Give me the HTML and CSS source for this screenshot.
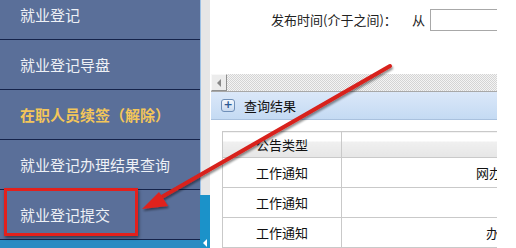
FILE: index.html
```html
<!DOCTYPE html>
<html lang="zh">
<head>
<meta charset="utf-8">
<link rel="stylesheet" href="styles.css">
</head>
<body>
<div class="page">
  <nav class="sidebar">
    <div class="item">就业登记</div>
    <div class="item">就业登记导盘</div>
    <div class="item active">在职人员续签（解除）</div>
    <div class="item">就业登记办理结果查询</div>
    <div class="item">就业登记提交</div>
    <div class="band"></div>
  </nav>
  <div class="splitter"><div class="split-top"></div><div class="split-bottom"><span class="tri"></span></div></div>
  <main class="main">
    <div class="form-row">
      <span class="label">发布时间(介于之间)：</span>
      <span class="from">从</span>
      <span class="input"></span>
    </div>
    <div class="scroll-row"><span class="scroll-btn"><span class="larr"></span></span></div>
    <div class="panel-head"><span class="plus">+</span><span class="title">查询结果</span></div>
    <table class="grid">
      <tr class="head"><td class="col1">公告类型</td><td></td></tr>
      <tr><td class="col1">工作通知</td><td class="c2"><span class="t1">网办</span></td></tr>
      <tr><td class="col1">工作通知</td><td class="c2"></td></tr>
      <tr><td class="col1">工作通知</td><td class="c2"><span class="t3">办</span></td></tr>
    </table>
  </main>
</div>
<div class="redbox"></div>
<svg class="arrow" width="516" height="248" viewBox="0 0 516 248">
  <defs>
    <filter id="sh" x="-10%" y="-10%" width="120%" height="130%">
      <feGaussianBlur in="SourceAlpha" stdDeviation="1.2"/>
      <feOffset dx="1" dy="2" result="b"/>
      <feComponentTransfer><feFuncA type="linear" slope="0.45"/></feComponentTransfer>
      <feMerge><feMergeNode/><feMergeNode in="SourceGraphic"/></feMerge>
    </filter>
  </defs>
  <g filter="url(#sh)">
    <line x1="390" y1="66" x2="160" y2="198" stroke="#d8201c" stroke-width="4" stroke-linecap="round"/>
    <polygon points="142,209 159,192 168,206" fill="#e0221e"/>
  </g>
</svg>
</body>
</html>
```
FILE: styles.css
```css
html, body { margin: 0; padding: 0; background: #fff; }
body { width: 516px; height: 248px; overflow: hidden; position: relative;
  font-family: "Noto Sans CJK SC", "Noto Sans", sans-serif; }
.page { display: flex; height: 248px; }
.sidebar { width: 200px; flex: none; background: #5a6f99; margin-top: -10px; display: flex; flex-direction: column; }
.item { height: 49px; border-bottom: 1px solid #15234a; display: flex; align-items: center;
  padding-left: 20px; font-size: 15px; color: #eef1f6; white-space: nowrap; }
.item.active { color: #f3c65a; font-weight: bold; }
.band { flex: 1; background: #2a8bc2; }
.splitter { width: 11px; flex: none; display: flex; flex-direction: column; }
.split-top { height: 195px; border-left: 1px solid #9cc0e4; background: #e6e6e6; margin-right: 1px; }
.split-bottom { flex: 1; background: #1b92c9; margin-right: 1px; position: relative; }
.tri { position: absolute; left: 3px; top: 44px; width: 0; height: 0;
  border-top: 4px solid transparent; border-bottom: 4px solid transparent; border-right: 4px solid #fff; }
.main { width: 286px; flex: none; overflow: hidden; display: flex; flex-direction: column; }
.form-row { height: 74px; display: flex; align-items: flex-start; padding-top: 9px; box-sizing: border-box;
  font-size: 13px; color: #222; white-space: nowrap; }
.label { margin-left: 60px; width: 141px; flex: none; line-height: 22px; }
.from { width: 18px; flex: none; line-height: 22px; }
.input { width: 80px; height: 20px; border: 1px solid #a8a8a8; flex: none; }
.scroll-row { height: 17px; border-bottom: 1px solid #a8a8a8;
  background: repeating-conic-gradient(#d4d4d4 0 25%, #f4f4f4 0 50%) 0 0 / 2px 2px; display: flex; }
.scroll-btn { width: 16px; height: 17px; box-sizing: border-box; background: #ececec;
  border: 1px solid #b4b4b4; border-color: #f8f8f8 #909090 #909090 #f8f8f8; display: flex; align-items: center; justify-content: center; }
.larr { width: 0; height: 0; border-top: 4px solid transparent; border-bottom: 4px solid transparent; border-right: 4px solid #888; }
.panel-head { height: 27px; border-bottom: 1px solid #a9c1de; display: flex; align-items: center;
  background: linear-gradient(#dbe8f9, #c4daf3); }
.plus { margin-left: 10px; width: 12px; height: 11px; border: 1px solid #6f8fb8; border-radius: 3px;
  background: linear-gradient(#f4f8fd, #c8d9ef); font-size: 11px; line-height: 10px; text-align: center;
  color: #2c5a94; font-weight: bold; font-family: "DejaVu Sans", sans-serif; }
.title { margin-left: 9px; font-size: 13px; color: #111; }
.grid { margin: 11px 0 0 11px; border-collapse: collapse; width: 290px; table-layout: fixed; font-size: 13px; color: #111; }
.grid td { border: 1px solid #c9c9c9; height: 29px; padding: 0; white-space: nowrap; overflow: hidden; }
.grid td.col1 { width: 118px; text-align: center; }
.grid tr.head td { height: 25px; background: linear-gradient(#fff 0, #fff 9px, #f0f0f0 9px, #e6e6e6 100%); }
.t1 { padding-left: 134px; }
.t3 { padding-left: 144px; }
.redbox { position: absolute; left: 4px; top: 188px; width: 128px; height: 42px;
  border: 3px solid #e3201c; box-shadow: 1px 2px 3px rgba(0,0,0,0.45); }
.arrow { position: absolute; left: 0; top: 0; pointer-events: none; }
```
